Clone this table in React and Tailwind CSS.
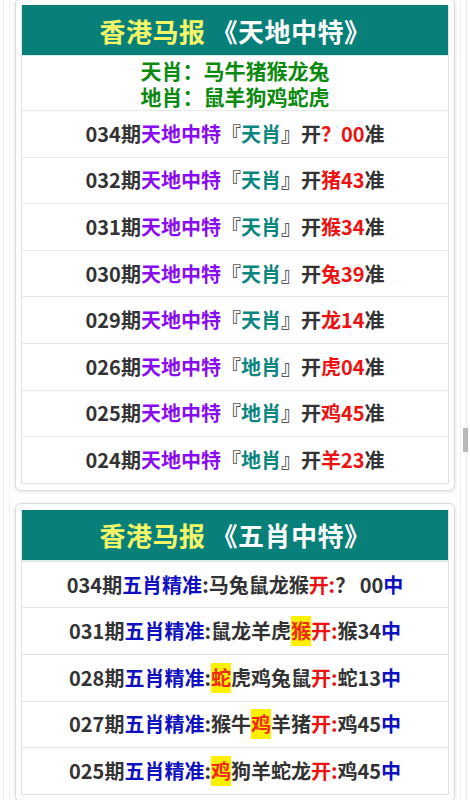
const tianDi = [
  { qi: "034", xiao: "天肖", kai: "？", num: "00" },
  { qi: "032", xiao: "天肖", kai: "猪", num: "43" },
  { qi: "031", xiao: "天肖", kai: "猴", num: "34" },
  { qi: "030", xiao: "天肖", kai: "兔", num: "39" },
  { qi: "029", xiao: "天肖", kai: "龙", num: "14" },
  { qi: "026", xiao: "地肖", kai: "虎", num: "04" },
  { qi: "025", xiao: "地肖", kai: "鸡", num: "45" },
  { qi: "024", xiao: "地肖", kai: "羊", num: "23" },
];

// hit = index of the highlighted animal in the five (-1 = none)
const wuXiao = [
  { qi: "034", five: "马兔鼠龙猴", hit: -1, res: "？ 00" },
  { qi: "031", five: "鼠龙羊虎猴", hit: 4, res: "猴34" },
  { qi: "028", five: "蛇虎鸡兔鼠", hit: 0, res: "蛇13" },
  { qi: "027", five: "猴牛鸡羊猪", hit: 2, res: "鸡45" },
  { qi: "025", five: "鸡狗羊蛇龙", hit: 0, res: "鸡45" },
];

function Header({ title }) {
  return (
    <div className="h-[51px] bg-[#068078] border-b border-[#d8eeee] flex items-center justify-center text-[26px] font-bold tracking-[0.5px]">
      <span className="text-[#f4f66a]">香港马报</span>
      <span className="text-white ml-[6px]">《{title}》</span>
    </div>
  );
}

function Card({ children, className = "" }) {
  return (
    <div className={"rounded-[6px] border border-[#dcdcdc] bg-white shadow-[0_1px_4px_rgba(0,0,0,0.12)] px-[5px] pt-[6px] pb-[6px] " + className}>
      <div className="border-x border-b border-[#e2e2e2]">{children}</div>
    </div>
  );
}

export default function App() {
  return (
    <div className="min-h-screen bg-white font-['Noto_Sans_CJK_SC',sans-serif] font-bold text-[#333]">
      <div className="mx-[3px] border-x border-[#ececec] min-h-screen">
        <div className="mx-[5px] border-x border-[#f0f0f0] px-[5px] pb-4">
          <Card className="-mt-[2px]">
            <Header title="天地中特" />
            <div className="h-[54px] flex flex-col items-center justify-center text-[#0c8a10] text-[21px] leading-[26px]">
              <div>天肖：马牛猪猴龙兔</div>
              <div>地肖：鼠羊狗鸡蛇虎</div>
            </div>
            {tianDi.map((r) => (
              <div
                key={r.qi}
                className="h-[46.6px] border-t border-[#e8e8e8] flex items-center justify-center text-[20px]"
              >
                <span>{r.qi}期</span>
                <span className="text-[#8a0cf0]">天地中特</span>
                <span className="text-[#555]">『</span>
                <span className="text-[#0b8580]">{r.xiao}</span>
                <span className="text-[#555]">』</span>
                <span>开</span>
                <span className="text-[#ee1111]">
                  {r.kai}
                  {r.num}
                </span>
                <span>准</span>
              </div>
            ))}
          </Card>

          <Card className="mt-[12px]">
            <Header title="五肖中特" />
            {wuXiao.map((r) => (
              <div
                key={r.qi}
                className="h-[46.6px] border-t border-[#e4e4e4] first:border-t-0 flex items-center justify-center text-[20px]"
              >
                <span>{r.qi}期</span>
                <span className="text-[#1010c0]">五肖精准</span>
                <span>:</span>
                {r.five.split("").map((c, i) =>
                  i === r.hit ? (
                    <span key={i} className="bg-[#ffef00] text-[#f02a10]">
                      {c}
                    </span>
                  ) : (
                    <span key={i}>{c}</span>
                  )
                )}
                <span className="text-[#ee1111]">开:</span>
                <span>{r.res}</span>
                <span className="text-[#1010c0]">中</span>
              </div>
            ))}
          </Card>
        </div>
      </div>
      <div className="fixed right-[2px] top-[428px] w-[5px] h-[24px] bg-[#b8b8b8]" />
    </div>
  );
}
